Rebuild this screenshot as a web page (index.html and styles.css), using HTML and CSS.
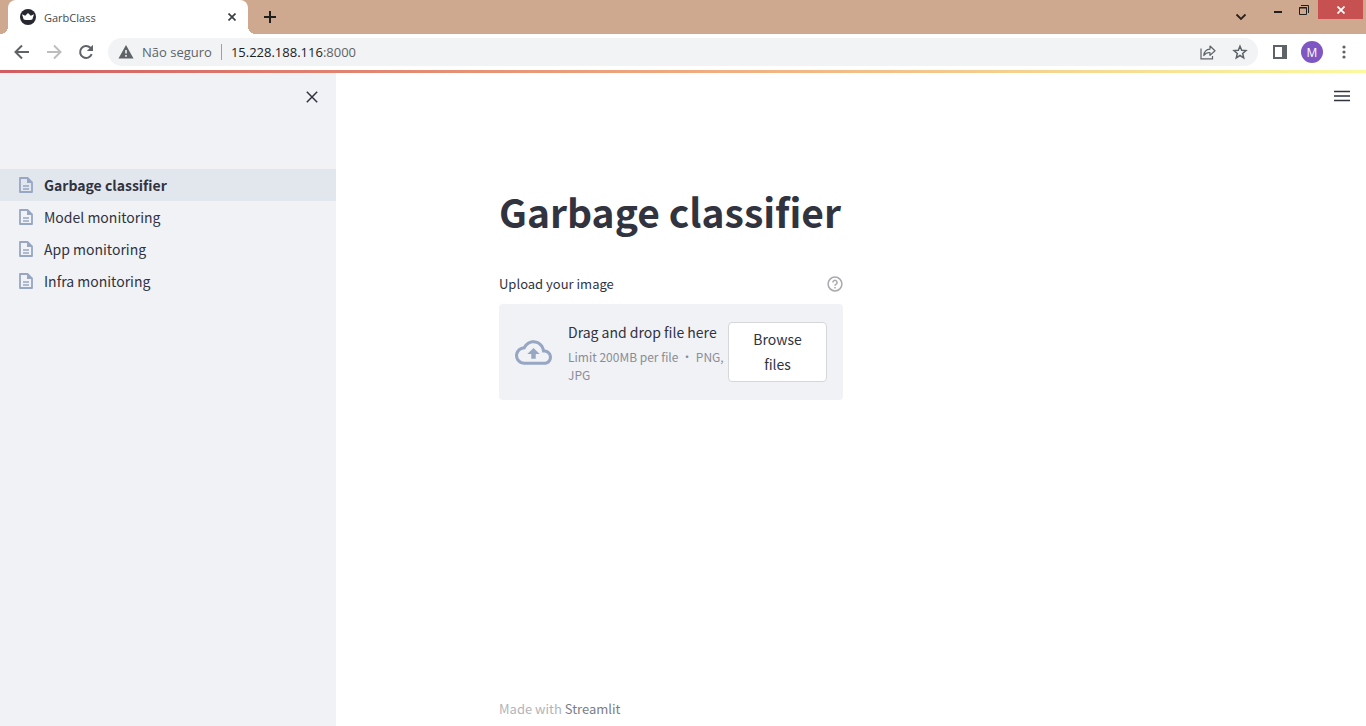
FILE: index.html
```html
<!DOCTYPE html>
<html lang="en">
<head>
<meta charset="utf-8">
<title>GarbClass</title>
<link rel="stylesheet" href="styles.css">
</head>
<body>
<svg class="defs" width="0" height="0" aria-hidden="true">
  <symbol id="page-icon" viewBox="0 0 14 16">
    <path fill="none" stroke="currentColor" stroke-width="1.800" stroke-linejoin="round" d="M1 1h7.500l4.500 4.500v9.500h-12z"/>
    <path fill="currentColor" d="M8 1l5 5h-5z"/>
    <path fill="none" stroke="currentColor" stroke-width="1.500" d="M4 9h6M4 12h6"/>
  </symbol>
</svg>
<header class="browser">
  <div class="tabstrip">
    <div class="tab">
      <svg width="16" height="16" viewBox="0 0 16 16"><circle cx="8" cy="8" r="8" fill="#262730"/><path fill="#fff" d="M2 5.200l3.200 1.500L8 4l2.800 2.700L14 5.200l-1.700 5.200c-2.500.7-6.100.7-8.600 0z"/></svg>
      <span class="tab-title">GarbClass</span>
      <button class="icon-btn tab-close" aria-label="Close tab"><svg width="8" height="8" viewBox="0 0 8 8"><path d="M0.500 0.500l7 7M7.500 0.500l-7 7" stroke="#3c4043" stroke-width="1.700"/></svg></button>
    </div>
    <button class="icon-btn new-tab" aria-label="New tab"><svg width="12" height="12" viewBox="0 0 12 12"><path d="M6 0v12M0 6h12" stroke="#1f1f1f" stroke-width="2"/></svg></button>
    <div class="window-controls">
      <button class="icon-btn tab-search" aria-label="Search tabs"><svg width="12" height="8" viewBox="0 0 12 8"><path d="M1.500 1.500L6 6l4.500-4.500" fill="none" stroke="#2b211c" stroke-width="1.800"/></svg></button>
      <button class="icon-btn win-btn" aria-label="Minimize"><svg width="10" height="10" viewBox="0 0 10 10"><path d="M1 7h8" stroke="#1f1f1f" stroke-width="2"/></svg></button>
      <button class="icon-btn win-btn" aria-label="Restore"><svg width="10" height="10" viewBox="0 0 10 10" fill="none" stroke="#1f1f1f"><path d="M.5 2.500h7v7h-7z"/><path d="M0 3h8"/><path d="M2 .5h7.500V8"/></svg></button>
      <button class="icon-btn win-close" aria-label="Close window"><svg width="8" height="8" viewBox="0 0 8 8"><path d="M.5 .5l7 7M7.500 .5l-7 7" stroke="#fff" stroke-width="1.700"/></svg></button>
    </div>
  </div>
  <div class="toolbar">
    <button class="icon-btn nav-btn" aria-label="Back"><svg width="16" height="16" viewBox="0 0 16 16"><path d="M15 8H2M8 1.500L1.500 8 8 14.500" fill="none" stroke="#5f6368" stroke-width="2"/></svg></button>
    <button class="icon-btn nav-btn" aria-label="Forward"><svg width="16" height="16" viewBox="0 0 16 16"><path d="M1 8h13M8 1.500L14.500 8 8 14.500" fill="none" stroke="#bbbdbf" stroke-width="2"/></svg></button>
    <button class="icon-btn nav-btn" aria-label="Reload"><svg width="16" height="16" viewBox="0 0 16 16"><path d="M13.700 10.200A6 6 0 1 1 12.400 3.800L14 5.400" fill="none" stroke="#5f6368" stroke-width="2"/><path d="M15 .8v6.200H8.800z" fill="#5f6368"/></svg></button>
    <div class="address">
      <svg width="16" height="14" viewBox="0 0 16 14"><path fill="#5f6368" d="M8 0l7.500 13.500H.5z"/><path stroke="#f1f3f4" stroke-width="1.600" d="M8 5v3.600M8 10v1.700"/></svg>
      <span class="insecure">Não seguro</span>
      <span class="url">15.228.188.116<span class="port">:8000</span></span>
      <button class="icon-btn addr-btn" aria-label="Share"><svg width="16" height="16" viewBox="0 0 16 16" fill="none" stroke="#5f6368" stroke-width="1.200"><path d="M1 4.500v10.300h11.500V12"/><path stroke-linejoin="round" d="M3.800 11.500c.4-4.200 2.600-6.200 6.200-6.400V2l5 4.800-5 4.600V8.500c-2.800-.1-4.700.8-6.200 3z"/></svg></button>
      <button class="icon-btn addr-btn" aria-label="Bookmark"><svg width="16" height="16" viewBox="0 0 16 16"><path d="M8 2.200l1.700 4 4.300.4-3.300 2.900 1 4.300L8 11.500l-3.700 2.300 1-4.300L2 6.600l4.300-.4z" fill="none" stroke="#5f6368" stroke-width="1.500"/></svg></button>
    </div>
    <button class="icon-btn ext-btn" aria-label="Side panel"><svg width="14" height="14" viewBox="0 0 14 14"><path fill="#5f6368" fill-rule="evenodd" d="M0 0h14v14H0zM2 2v10h7V2z"/></svg></button>
    <button class="avatar" aria-label="Profile M">M</button>
    <button class="icon-btn ext-btn" aria-label="Menu"><svg width="4" height="14" viewBox="0 0 4 14" fill="#5f6368"><circle cx="2" cy="2" r="1.600"/><circle cx="2" cy="7" r="1.600"/><circle cx="2" cy="12" r="1.600"/></svg></button>
  </div>
</header>
<div class="decoration"></div>
<div class="app">
  <aside class="sidebar">
    <div class="sidebar-top"><button class="icon-btn" aria-label="Close sidebar"><svg width="12" height="12" viewBox="0 0 12 12"><path d="M.8 .8l10.400 10.400M11.200 .8L.8 11.200" stroke="#31333f" stroke-width="1.500"/></svg></button></div>
    <nav class="pages">
      <a href="#" class="page-link active"><svg width="14" height="16"><use href="#page-icon"/></svg>Garbage classifier</a>
      <a href="#" class="page-link"><svg width="14" height="16"><use href="#page-icon"/></svg>Model monitoring</a>
      <a href="#" class="page-link"><svg width="14" height="16"><use href="#page-icon"/></svg>App monitoring</a>
      <a href="#" class="page-link"><svg width="14" height="16"><use href="#page-icon"/></svg>Infra monitoring</a>
    </nav>
  </aside>
  <main class="main">
    <div class="main-top"><button class="icon-btn" aria-label="Main menu"><svg width="16" height="12" viewBox="0 0 16 12"><path d="M0 1.500h16M0 6h16M0 10.500h16" stroke="#31333f" stroke-width="1.600"/></svg></button></div>
    <div class="block">
      <h1>Garbage classifier</h1>
      <div class="columns">
        <section class="uploader">
          <div class="label-row">
            <span id="upload-label">Upload your image</span>
            <button class="icon-btn" aria-label="Help"><svg width="16" height="16" viewBox="0 0 16 16" fill="none" stroke="#a9aaaf" stroke-width="1.500"><circle cx="8" cy="8" r="6.900"/><path d="M5.900 6.500a2.100 2.100 0 1 1 3.300 1.700c-.8.500-1.200.8-1.200 1.600M8 10.900v1.500"/></svg></button>
          </div>
          <div class="dropzone" role="group" aria-labelledby="upload-label">
            <svg class="cloud" width="37" height="25" viewBox="0 4 24 16"><path fill="#97a6c3" d="M19.350 10.040C18.670 6.590 15.640 4 12 4 9.110 4 6.600 5.640 5.350 8.040 2.340 8.360 0 10.910 0 14c0 3.310 2.690 6 6 6h13c2.760 0 5-2.240 5-5 0-2.640-2.050-4.780-4.650-4.960zM19 18H6c-2.210 0-4-1.790-4-4 0-2.050 1.530-3.760 3.560-3.970l1.070-.11.500-.95C8.080 7.140 9.940 6 12 6c2.620 0 4.880 1.860 5.390 4.430l.3 1.500 1.530.11c1.560.1 2.780 1.410 2.780 2.960 0 1.650-1.350 3-3 3zM8 13h2.550v3h2.900v-3H16l-4-4z"/></svg>
            <div class="drop-text">
              <span class="drop-title">Drag and drop file here</span>
              <small class="drop-limit">Limit 200MB per file • PNG, JPG</small>
            </div>
            <button class="browse">Browse files</button>
          </div>
        </section>
      </div>
    </div>
    <footer class="footer">Made with <a href="#">Streamlit</a></footer>
  </main>
</div>
</body>
</html>
```
FILE: styles.css
```css
* {
  box-sizing: border-box;
}

body {
  margin: 0;
  min-height: 100vh;
  display: flex;
  flex-direction: column;
  background: #fff;
  color: #31333f;
  font-family: "Noto Sans CJK SC", sans-serif;
  font-size: 14px;
}

a {
  color: inherit;
  text-decoration: none;
}

button {
  font: inherit;
  color: inherit;
}

svg {
  display: block;
  flex: none;
}

.defs {
  position: absolute;
}

.icon-btn {
  display: flex;
  align-items: center;
  justify-content: center;
  flex: none;
  padding: 0;
  border: 0;
  background: none;
}

.browser {
  font-family: "Open Sans", "Noto Sans", sans-serif;
}

.tabstrip {
  display: flex;
  height: 34px;
  padding-left: 8px;
  background: #cea98f;
}

.tab {
  position: relative;
  display: flex;
  align-items: center;
  gap: 8px;
  width: 240px;
  padding: 0 12px;
  border-radius: 8px 8px 0 0;
  background: #fff;
}

.tab::before,
.tab::after {
  content: "";
  position: absolute;
  bottom: 0;
  width: 8px;
  height: 8px;
}

.tab::before {
  right: 100%;
  background: radial-gradient(circle at 0 0, transparent 8px, #fff 8px);
}

.tab::after {
  left: 100%;
  background: radial-gradient(circle at 100% 0, transparent 8px, #fff 8px);
}

.tab-title {
  flex: 1;
  font-size: 11px;
  color: #45484c;
}

.new-tab {
  width: 44px;
}

.window-controls {
  display: flex;
  align-items: flex-start;
  margin-left: auto;
  padding-right: 3px;
}

.tab-search {
  width: 24px;
  height: 34px;
  margin-right: 12px;
}

.win-btn {
  width: 26px;
  height: 19px;
}

.win-close {
  width: 45px;
  height: 19px;
  margin-left: 1px;
  background: #c75050;
}

.toolbar {
  display: flex;
  align-items: center;
  height: 36px;
  padding: 0 6px;
}

.nav-btn,
.addr-btn,
.ext-btn {
  width: 32px;
  height: 28px;
}

.address {
  display: flex;
  align-items: center;
  flex: 1;
  height: 28px;
  margin: 0 6px;
  padding: 0 2px 0 10px;
  border-radius: 14px;
  background: #f1f3f4;
  font-size: 13px;
}

.insecure {
  margin-left: 8px;
  padding-right: 9px;
  border-right: 1px solid #9aa0a6;
  line-height: 16px;
  color: #5f6368;
}

.url {
  flex: 1;
  padding-left: 9px;
  color: #202124;
}

.port {
  color: #5f6368;
}

.avatar {
  width: 22px;
  height: 22px;
  margin: 0 5px;
  padding: 0;
  border: 0;
  border-radius: 50%;
  background: #7e57c2;
  color: #fff;
  font-size: 12px;
}

.decoration {
  height: 3px;
  background: linear-gradient(90deg, #d15c61, #f0a97e 50%, #fafaa0);
}

.app {
  display: flex;
  flex: 1;
}

.sidebar {
  flex: none;
  width: 336px;
  background: #f0f2f6;
}

.sidebar-top {
  display: flex;
  justify-content: flex-end;
  height: 96px;
  padding: 18px 18px 66px;
}

.page-link {
  display: flex;
  align-items: center;
  gap: 11px;
  height: 32px;
  padding-left: 19px;
}

.page-link svg {
  color: #97a6c3;
}

.active {
  background: #e2e7ee;
  font-weight: 700;
}

.main {
  display: flex;
  flex: 1;
  flex-direction: column;
}

.main-top {
  display: flex;
  justify-content: flex-end;
  padding: 17px 16px;
}

.block,
.footer {
  width: 100%;
  max-width: 704px;
  margin: 0 auto;
}

.block {
  padding-top: 62px;
}

h1 {
  margin: 0;
  font-size: 39px;
  line-height: 60px;
  font-weight: 700;
}

.columns {
  display: grid;
  grid-template-columns: 1fr 1fr;
  gap: 16px;
  padding-top: 32px;
}

.label-row {
  display: flex;
  align-items: center;
  justify-content: space-between;
  margin-bottom: 9px;
  font-size: 13px;
  line-height: 22px;
}

.dropzone {
  display: flex;
  align-items: center;
  min-height: 96px;
  padding: 16px;
  border-radius: 4px;
  background: #f0f2f6;
}

.cloud {
  margin-right: 16px;
}

.drop-text {
  display: flex;
  flex: 1;
  flex-direction: column;
  gap: 4px;
}

.drop-title {
  line-height: 24px;
}

.drop-limit {
  color: #8b8d95;
  font-size: 12px;
  line-height: 18px;
}

.browse {
  flex: none;
  width: 99px;
  padding: 4px 12px;
  border: 1px solid #d6d7db;
  border-radius: 4px;
  background: #fff;
  line-height: 25px;
}

.footer {
  margin-top: auto;
  padding-bottom: 6px;
  color: #b3b4b9;
  font-size: 13px;
  line-height: 22px;
}

.footer a {
  color: #7b7d86;
}
```
